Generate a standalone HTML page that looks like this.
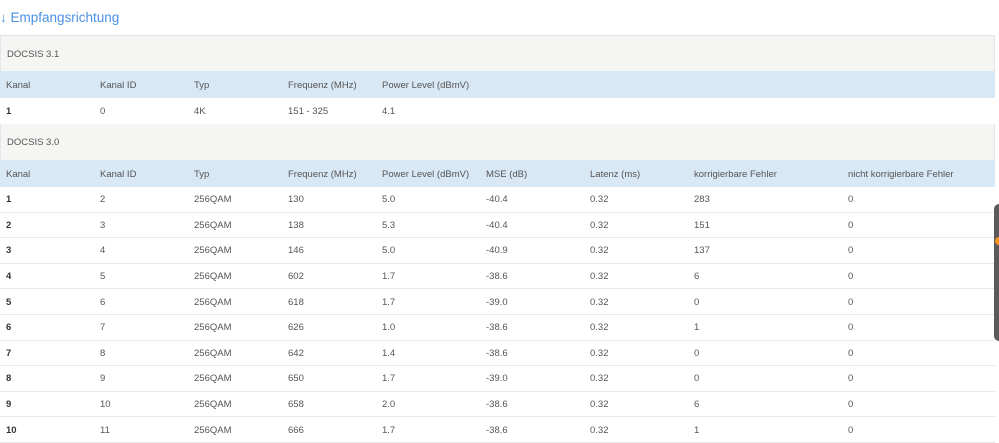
<!DOCTYPE html>
<html><head><meta charset="utf-8"><style>
*{margin:0;padding:0;box-sizing:border-box}
body{width:999px;height:440px;overflow:hidden;background:#fff;font-family:"Liberation Sans",sans-serif;font-size:9.5px;color:#555;position:relative}
.h{position:absolute;left:0;top:10px;font-size:13.5px;color:#4a90e2}
.band{position:absolute;left:0;width:995px;background:#f5f5f3;border-left:1px solid #e6e6e6;border-right:1px solid #e6e6e6}
.hdr{position:absolute;left:0;width:995px;background:#d9e8f5}
.row{position:absolute;left:0;width:995px;border-bottom:1px solid #e8e8e8;background:#fff}
.c{position:absolute;top:50%;transform:translateY(-45%);white-space:nowrap}
.b{font-weight:bold;color:#333}
</style></head><body>
<div class="h">↓ Empfangsrichtung</div>
<div class="band" style="top:35px;height:36px;border-top:1px solid #e3e3e3"><span class="c" style="left:6px">DOCSIS 3.1</span></div>
<div class="hdr" style="top:71px;height:27px">
<span class="c" style="left:6px">Kanal</span><span class="c" style="left:100px">Kanal ID</span><span class="c" style="left:194px">Typ</span><span class="c" style="left:288px">Frequenz (MHz)</span><span class="c" style="left:382px">Power Level (dBmV)</span></div>
<div class="row" style="top:98px;height:26px;border:none">
<span class="c b" style="left:6px">1</span><span class="c" style="left:100px">0</span><span class="c" style="left:194px">4K</span><span class="c" style="left:288px">151 - 325</span><span class="c" style="left:382px">4.1</span></div>
<div class="band" style="top:124px;height:36px"><span class="c" style="left:6px">DOCSIS 3.0</span></div>
<div class="hdr" style="top:160px;height:27px">
<span class="c" style="left:6px">Kanal</span><span class="c" style="left:100px">Kanal ID</span><span class="c" style="left:194px">Typ</span><span class="c" style="left:288px">Frequenz (MHz)</span><span class="c" style="left:382px">Power Level (dBmV)</span><span class="c" style="left:486px">MSE (dB)</span><span class="c" style="left:590px">Latenz (ms)</span><span class="c" style="left:694px">korrigierbare Fehler</span><span class="c" style="left:848px">nicht korrigierbare Fehler</span></div>
<div class="row" style="top:187.0px;height:25.6px"><span class="c b" style="left:6px">1</span><span class="c" style="left:100px">2</span><span class="c" style="left:194px">256QAM</span><span class="c" style="left:288px">130</span><span class="c" style="left:382px">5.0</span><span class="c" style="left:486px">-40.4</span><span class="c" style="left:590px">0.32</span><span class="c" style="left:694px">283</span><span class="c" style="left:848px">0</span></div>
<div class="row" style="top:212.6px;height:25.6px"><span class="c b" style="left:6px">2</span><span class="c" style="left:100px">3</span><span class="c" style="left:194px">256QAM</span><span class="c" style="left:288px">138</span><span class="c" style="left:382px">5.3</span><span class="c" style="left:486px">-40.4</span><span class="c" style="left:590px">0.32</span><span class="c" style="left:694px">151</span><span class="c" style="left:848px">0</span></div>
<div class="row" style="top:238.2px;height:25.6px"><span class="c b" style="left:6px">3</span><span class="c" style="left:100px">4</span><span class="c" style="left:194px">256QAM</span><span class="c" style="left:288px">146</span><span class="c" style="left:382px">5.0</span><span class="c" style="left:486px">-40.9</span><span class="c" style="left:590px">0.32</span><span class="c" style="left:694px">137</span><span class="c" style="left:848px">0</span></div>
<div class="row" style="top:263.8px;height:25.6px"><span class="c b" style="left:6px">4</span><span class="c" style="left:100px">5</span><span class="c" style="left:194px">256QAM</span><span class="c" style="left:288px">602</span><span class="c" style="left:382px">1.7</span><span class="c" style="left:486px">-38.6</span><span class="c" style="left:590px">0.32</span><span class="c" style="left:694px">6</span><span class="c" style="left:848px">0</span></div>
<div class="row" style="top:289.4px;height:25.6px"><span class="c b" style="left:6px">5</span><span class="c" style="left:100px">6</span><span class="c" style="left:194px">256QAM</span><span class="c" style="left:288px">618</span><span class="c" style="left:382px">1.7</span><span class="c" style="left:486px">-39.0</span><span class="c" style="left:590px">0.32</span><span class="c" style="left:694px">0</span><span class="c" style="left:848px">0</span></div>
<div class="row" style="top:315.0px;height:25.6px"><span class="c b" style="left:6px">6</span><span class="c" style="left:100px">7</span><span class="c" style="left:194px">256QAM</span><span class="c" style="left:288px">626</span><span class="c" style="left:382px">1.0</span><span class="c" style="left:486px">-38.6</span><span class="c" style="left:590px">0.32</span><span class="c" style="left:694px">1</span><span class="c" style="left:848px">0</span></div>
<div class="row" style="top:340.6px;height:25.6px"><span class="c b" style="left:6px">7</span><span class="c" style="left:100px">8</span><span class="c" style="left:194px">256QAM</span><span class="c" style="left:288px">642</span><span class="c" style="left:382px">1.4</span><span class="c" style="left:486px">-38.6</span><span class="c" style="left:590px">0.32</span><span class="c" style="left:694px">0</span><span class="c" style="left:848px">0</span></div>
<div class="row" style="top:366.2px;height:25.6px"><span class="c b" style="left:6px">8</span><span class="c" style="left:100px">9</span><span class="c" style="left:194px">256QAM</span><span class="c" style="left:288px">650</span><span class="c" style="left:382px">1.7</span><span class="c" style="left:486px">-39.0</span><span class="c" style="left:590px">0.32</span><span class="c" style="left:694px">0</span><span class="c" style="left:848px">0</span></div>
<div class="row" style="top:391.8px;height:25.6px"><span class="c b" style="left:6px">9</span><span class="c" style="left:100px">10</span><span class="c" style="left:194px">256QAM</span><span class="c" style="left:288px">658</span><span class="c" style="left:382px">2.0</span><span class="c" style="left:486px">-38.6</span><span class="c" style="left:590px">0.32</span><span class="c" style="left:694px">6</span><span class="c" style="left:848px">0</span></div>
<div class="row" style="top:417.4px;height:25.6px"><span class="c b" style="left:6px">10</span><span class="c" style="left:100px">11</span><span class="c" style="left:194px">256QAM</span><span class="c" style="left:288px">666</span><span class="c" style="left:382px">1.7</span><span class="c" style="left:486px">-38.6</span><span class="c" style="left:590px">0.32</span><span class="c" style="left:694px">1</span><span class="c" style="left:848px">0</span></div>
<div style="position:absolute;left:994px;top:204px;width:10px;height:137px;background:#5a5a5a;border-radius:5px 0 0 5px"></div>
<div style="position:absolute;left:995px;top:237px;width:8px;height:8px;background:#f7941d;border-radius:50%"></div>
</body></html>
